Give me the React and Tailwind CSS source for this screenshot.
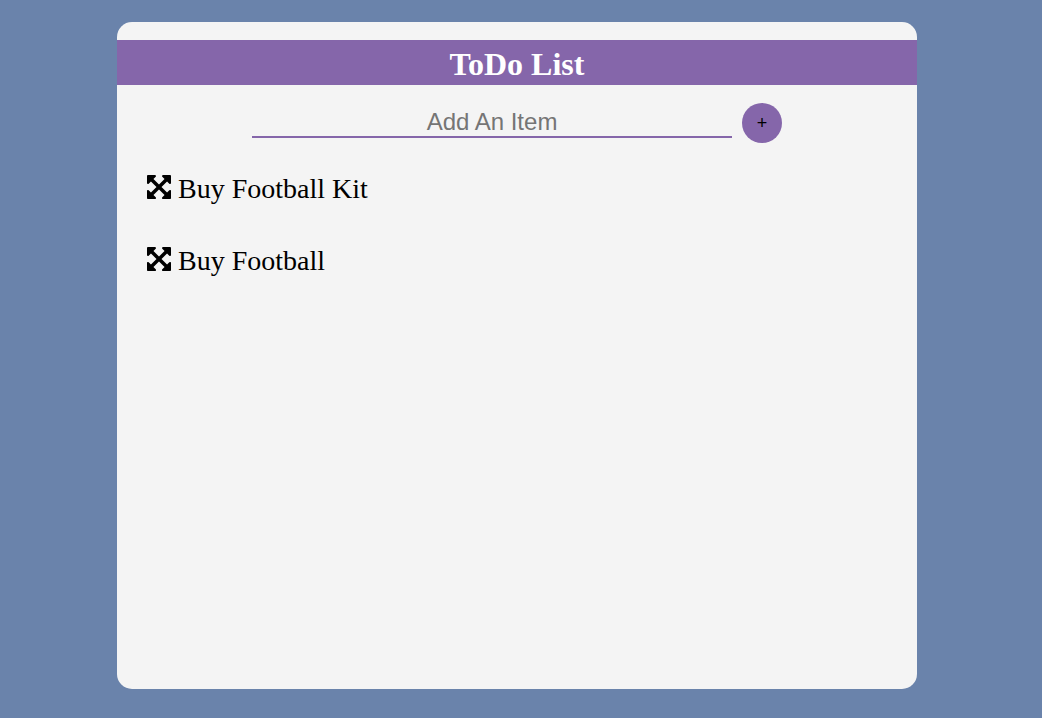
import { useState } from 'react';

function ExpandArrowsIcon() {
  return (
    <svg viewBox="0 -128 1536 1536" className="block size-6" fill="currentColor" aria-hidden="true">
      <path d="M1283 995l-355-355 355-355 144 144q29 31 70 14 39-17 39-59v-448q0-26-19-45t-45-19h-448q-42 0-59 40-17 39 14 69l144 144-355 355-355-355 144-144q31-30 14-69-17-40-59-40h-448q-26 0-45 19t-19 45v448q0 42 40 59 39 17 69-14l144-144 355 355-355 355-144-144q-19-19-45-19-12 0-24 5-40 17-40 59v448q0 26 19 45t45 19h448q42 0 59-40 17-39-14-69l-144-144 355-355 355 355-144 144q-31 30-14 69 17 40 59 40h448q26 0 45-19t19-45v-448q0-42-39-59-13-5-25-5-26 0-45 19z" />
    </svg>
  );
}

export default function App() {
  const [items, setItems] = useState(['Buy Football Kit', 'Buy Football']);
  const [text, setText] = useState('');

  const addItem = (event) => {
    event.preventDefault();
    if (!text.trim()) return;
    setItems([...items, text.trim()]);
    setText('');
  };

  const removeItem = (index) => setItems(items.filter((_, i) => i !== index));

  return (
    <div className="flex min-h-screen justify-center bg-[#6a83ab] pt-[22px] pr-2 pb-[29px] font-['Liberation_Serif',serif] text-black">
      <main className="flex w-full max-w-[800px] flex-col rounded-[15px] bg-[#f4f4f4] pt-[18px]">
        <h1 className="bg-[#8566aa] pt-1.5 pb-0.5 text-center text-[32px] leading-[37px] font-bold text-white">
          ToDo List
        </h1>
        <form onSubmit={addItem} className="mt-[18px] flex justify-center gap-[10px]">
          <input
            type="text"
            aria-label="Add An Item"
            placeholder="Add An Item"
            value={text}
            onChange={(event) => setText(event.target.value)}
            className="h-[35px] w-3/5 border-b-2 border-[#8566aa] bg-transparent pt-1 text-center font-['Liberation_Sans',sans-serif] text-2xl outline-none placeholder:text-[#757575]"
          />
          <button
            type="submit"
            aria-label="Add"
            className="size-10 rounded-full bg-[#8566aa] font-['Liberation_Sans',sans-serif] text-lg text-black"
          >
            +
          </button>
        </form>
        <ul className="mt-[30px] flex flex-col gap-10 px-[30px]">
          {items.map((item, index) => (
            <li key={index} className="flex items-center gap-[7px] text-[28px] leading-8">
              <button
                type="button"
                aria-label={'Remove ' + item}
                onClick={() => removeItem(index)}
                className="shrink-0 pb-1"
              >
                <ExpandArrowsIcon />
              </button>
              <span>{item}</span>
            </li>
          ))}
        </ul>
      </main>
    </div>
  );
}
